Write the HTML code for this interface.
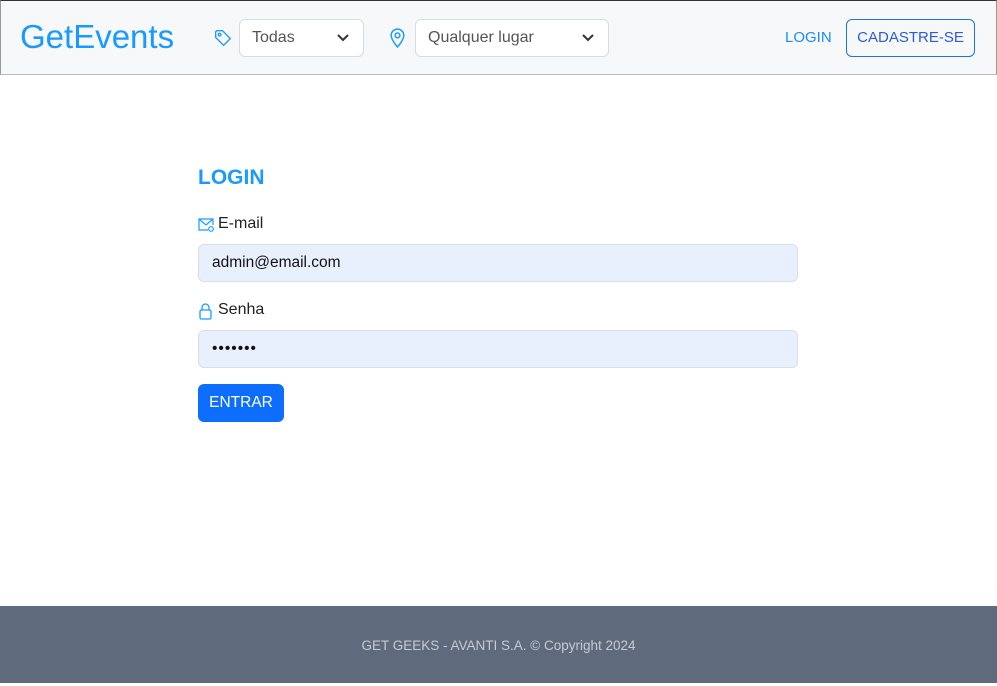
<!DOCTYPE html>
<html><head><meta charset="utf-8"><style>
*{box-sizing:border-box;margin:0;padding:0}
html,body{width:997px;height:683px;overflow:hidden;background:#fff;font-family:"Liberation Sans",sans-serif}
.top{position:absolute;left:0;top:0;width:997px;height:75px;background:#f7f8fa;border-top:1px solid #333;border-left:1px solid #999;border-right:1px solid #999;border-bottom:1px solid #bbb}
.logo{position:absolute;left:19px;top:17px;font-size:33px;color:#1a9aff}
.sel{position:absolute;top:18px;height:38px;border:1px solid #d8dbe0;border-radius:6px;background:#fff;font-size:16px;color:#555;padding:9px 12px}
.sel svg{position:absolute;right:14px;top:14px}
.ic{position:absolute}
.lnk{position:absolute;left:784px;top:28px;font-size:15px;color:#1a8cff}
.btn2{position:absolute;left:845px;top:18px;width:129px;height:38px;border:1px solid #1a73e8;border-radius:6px;color:#2b5bdc;font-size:15px;text-align:center;line-height:36px}
h2{position:absolute;left:198px;top:166px;font-size:21px;color:#1a9aff;font-weight:bold}
.lbl{position:absolute;left:198px;font-size:16px;color:#222;white-space:nowrap;width:200px;height:20px}
.lbl span{position:absolute;left:20px;top:0}
.inp{position:absolute;left:198px;width:600px;height:38px;background:#e8f0fe;border:1px solid #d8dde6;border-radius:6px;font-size:15.5px;color:#111;padding:9px 13px}
.enter{position:absolute;left:198px;top:384px;width:86px;height:38px;background:#0d6efd;color:#fff;border-radius:6px;font-size:15.5px;text-align:center;line-height:37px}
.foot{position:absolute;left:0;top:606px;width:997px;height:77px;background:#5f6a7d;color:#c5cad3;font-size:13.5px;text-align:center;line-height:80px}
</style></head><body>
<div class="top">
<div class="logo">GetEvents</div>
<svg class="ic" style="left:213px;top:28px" width="18" height="18" viewBox="0 0 16 16" fill="none" stroke="#1a9aff" stroke-width="1.2"><path d="M1.5 2.5v5l7 7 6-6-7-7h-5z"/><circle cx="5" cy="5" r="1.2"/></svg>
<div class="sel" style="left:238px;width:125px">Todas<svg width="12" height="8" viewBox="0 0 12 8"><path d="M1 1l5 5 5-5" stroke="#333" stroke-width="2" fill="none"/></svg></div>
<svg class="ic" style="left:388px;top:26px" width="17" height="21" viewBox="0 0 16 20" fill="none" stroke="#1a9aff" stroke-width="1.4"><path d="M8 19s6-6.5 6-11A6 6 0 0 0 2 8c0 4.5 6 11 6 11z"/><circle cx="8" cy="8" r="2.3"/></svg>
<div class="sel" style="left:414px;width:194px">Qualquer lugar<svg width="12" height="8" viewBox="0 0 12 8"><path d="M1 1l5 5 5-5" stroke="#333" stroke-width="2" fill="none"/></svg></div>
<div class="lnk">LOGIN</div>
<div class="btn2">CADASTRE-SE</div>
</div>
<h2>LOGIN</h2>
<div class="lbl" style="top:215px"><svg style="position:absolute;left:0;top:3px" width="17" height="14" viewBox="0 0 17 14" fill="none" stroke="#1a9aff" stroke-width="1.2"><path d="M10 12H1V1h14v6"/><path d="M1 1l7 6 7-6"/><circle cx="13" cy="11" r="2.3"/></svg><span>E-mail</span></div>
<div class="inp" style="top:244px">admin@email.com</div>
<div class="lbl" style="top:301px"><svg style="position:absolute;left:1px;top:2px" width="13" height="17" viewBox="0 0 13 17" fill="none" stroke="#1a9aff" stroke-width="1.3"><path d="M3 7V4.5a3.5 3.5 0 0 1 7 0V7"/><rect x="1" y="7" width="11" height="9" rx="1.5"/></svg><span>Senha</span></div>
<div class="inp" style="top:330px;letter-spacing:1px">•••••••</div>
<div class="enter">ENTRAR</div>
<div class="foot">GET GEEKS - AVANTI S.A. © Copyright 2024</div>
</body></html>
